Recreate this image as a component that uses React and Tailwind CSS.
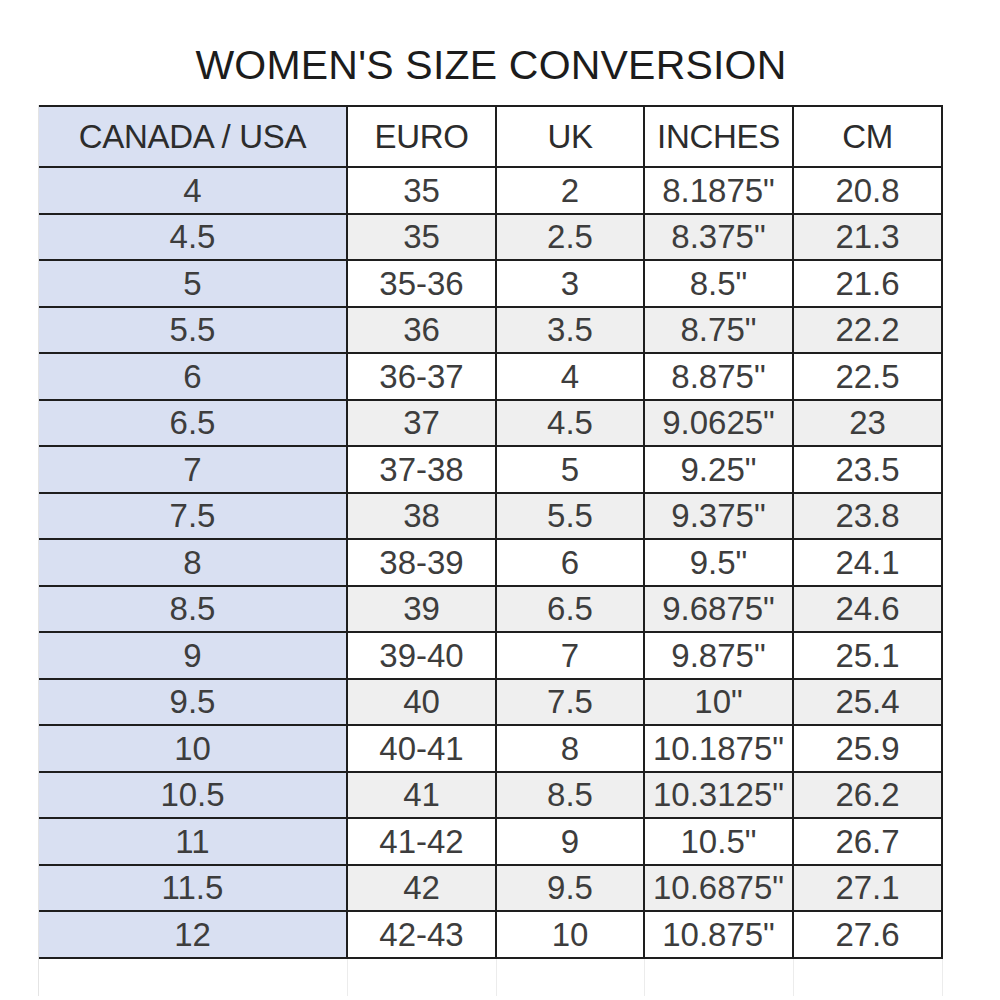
const headers = ['CANADA / USA', 'EURO', 'UK', 'INCHES', 'CM'];

const rows = [
  ['4', '35', '2', '8.1875"', '20.8'],
  ['4.5', '35', '2.5', '8.375"', '21.3'],
  ['5', '35-36', '3', '8.5"', '21.6'],
  ['5.5', '36', '3.5', '8.75"', '22.2'],
  ['6', '36-37', '4', '8.875"', '22.5'],
  ['6.5', '37', '4.5', '9.0625"', '23'],
  ['7', '37-38', '5', '9.25"', '23.5'],
  ['7.5', '38', '5.5', '9.375"', '23.8'],
  ['8', '38-39', '6', '9.5"', '24.1'],
  ['8.5', '39', '6.5', '9.6875"', '24.6'],
  ['9', '39-40', '7', '9.875"', '25.1'],
  ['9.5', '40', '7.5', '10"', '25.4'],
  ['10', '40-41', '8', '10.1875"', '25.9'],
  ['10.5', '41', '8.5', '10.3125"', '26.2'],
  ['11', '41-42', '9', '10.5"', '26.7'],
  ['11.5', '42', '9.5', '10.6875"', '27.1'],
  ['12', '42-43', '10', '10.875"', '27.6'],
];

const cols = 'grid grid-cols-[309px_149px_148px_149px_149px] grid-rows-[100%]';

const SizeChart = () => {
  return (
    <div className="w-[1000px] h-[1000px] bg-white font-['Liberation_Sans',Arial,sans-serif] overflow-hidden">
      <div className="pt-[45px] pl-[39px] w-[943px]">
        <h1 className="h-[40px] leading-[40px] text-[41px] text-center text-[#1c1c1c] tracking-[0.2px]">
          WOMEN'S SIZE CONVERSION
        </h1>
      </div>

      <div className="mt-[20px] ml-[38px] w-[905px] border-l border-[#e4e4e4]">
        <div className="border-t-2 border-[#1e1e1e]">
          <div className={`${cols} h-[61px] border-b-2 border-[#1e1e1e]`}>
            {headers.map((h, i) => (
              <div
                key={h}
                className={`flex items-center justify-center leading-none border-r-2 border-[#1e1e1e] text-[33px] text-[#2c2c2c] tracking-[-0.3px] ${i === 0 ? 'bg-[#d9e0f2]' : 'bg-white'}`}
              >
                {h}
              </div>
            ))}
          </div>

          {rows.map((row, r) => (
            <div key={r} className={`${cols} h-[46.5px] border-b-2 border-[#1e1e1e]`}>
              {row.map((v, i) => (
                <div
                  key={i}
                  className={`flex items-center justify-center leading-none border-r-2 border-[#1e1e1e] text-[33px] text-[#3d3d3d] ${
                    i === 0 ? 'bg-[#d9e0f2]' : r % 2 === 1 ? 'bg-[#efefef]' : 'bg-white'
                  }`}
                >
                  {v}
                </div>
              ))}
            </div>
          ))}

          <div className={`${cols} h-[37px]`}>
            {headers.map((h) => (
              <div key={h} className="border-r border-[#ececec]" />
            ))}
          </div>
        </div>
      </div>
    </div>
  );
};

export default SizeChart;
